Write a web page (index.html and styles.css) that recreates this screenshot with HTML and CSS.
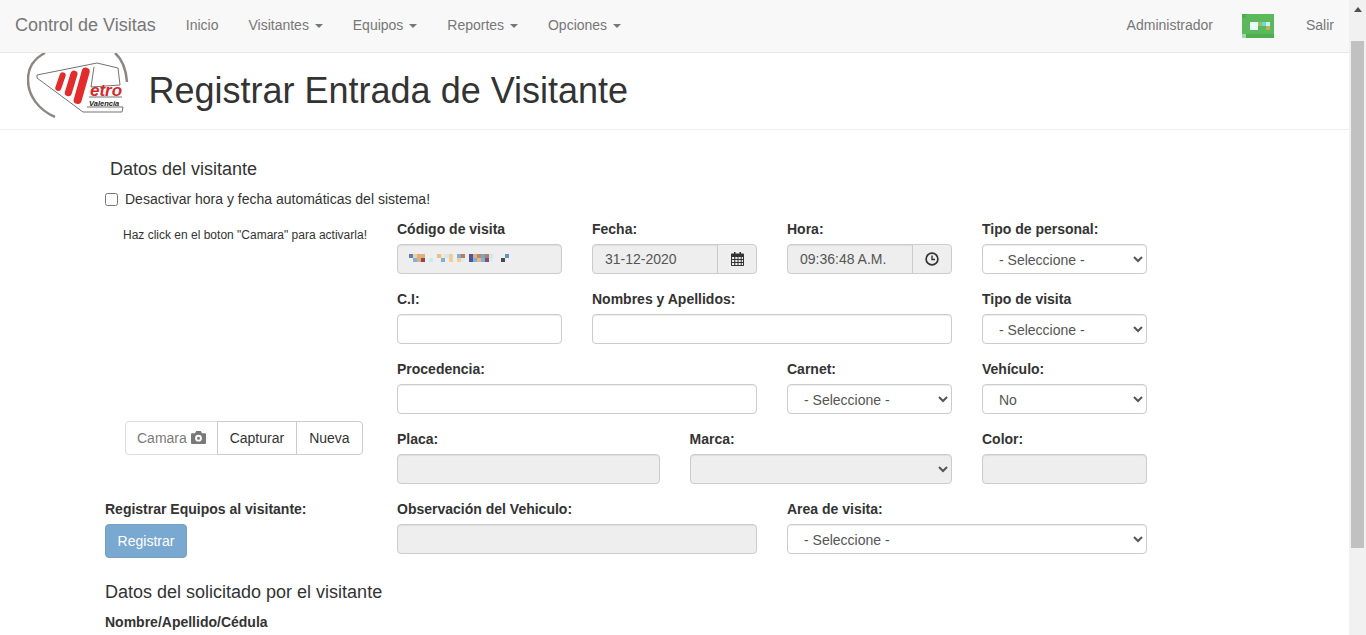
FILE: index.html
```html
<!DOCTYPE html>
<html lang="es">
<head>
  <meta charset="UTF-8" />
  <meta name="viewport" content="width=device-width, initial-scale=1.0"/>
  <title>Control de Visitas</title>
  <link rel="stylesheet" href="styles.css">
</head>
<body>
<div class="app">
  <div class="page">

    <!-- top navigation -->
    <nav class="navbar">
      <a class="brand" href="#">Control de Visitas</a>
      <a class="nav-link" href="#">Inicio</a>
      <a class="nav-link" href="#">Visitantes <span class="caret"></span></a>
      <a class="nav-link" href="#">Equipos <span class="caret"></span></a>
      <a class="nav-link" href="#">Reportes <span class="caret"></span></a>
      <a class="nav-link" href="#">Opciones <span class="caret"></span></a>
      <div class="nav-right">
        <a class="nav-link" href="#">Administrador</a>
        <svg class="avatar" width="32" height="24" viewBox="0 0 32 24">
          <rect width="32" height="24" fill="#5cb85c"/>
          <rect width="4" height="4" fill="#4cae4c"/>
          <rect y="20" width="32" height="4" fill="#4cae4c"/>
          <rect y="20" width="4" height="4" fill="#a5d6a5"/>
          <rect x="8" y="8" width="8" height="8" fill="#e8fffa"/>
          <rect x="16" y="8" width="4" height="4" fill="#a9b86a"/>
          <rect x="20" y="8" width="4" height="4" fill="#5ce0d8"/>
          <rect x="24" y="8" width="4" height="4" fill="#cfeff0"/>
          <rect x="24" y="12" width="4" height="4" fill="#c4b050"/>
        </svg>
        <a class="nav-link" href="#">Salir</a>
      </div>
    </nav>

    <!-- logo + page title -->
    <header class="page-header">
      <svg class="logo" width="102" height="65" viewBox="0 0 102 65">
        <g fill="none">
          <path d="M18 0C6 6 1 16 1 27c0 16 11 30 27 37" stroke="#8c8785" stroke-width="2.5"/>
          <path d="M88 0c7 6 11 16 12 29" stroke="#8c8785" stroke-width="2.5"/>
          <path d="M10 22L70 10l21 5 2 17-29 2 3-20M10 22v3l46 34h39l1-5H60" stroke="#77726f" stroke-width="1"/>
          <path d="M62 44h33" stroke="#77726f" stroke-width="1"/>
          <g stroke="#e32b2b" stroke-linecap="round">
            <path d="M35.7 22.3L31.3 35" stroke-width="6"/>
            <path d="M47 21l-5.7 18.7" stroke-width="7"/>
            <path d="M58.7 18.7L50.7 47" stroke-width="8"/>
          </g>
        </g>
        <text class="logo-etro" x="63" y="43">etro</text>
        <text class="logo-city" x="62" y="52.500">Valencia</text>
      </svg>
      <h1>Registrar Entrada de Visitante</h1>
    </header>

    <form class="visit-form">
      <h4 class="form-title">Datos del visitante</h4>
      <label class="check-row"><input type="checkbox"> Desactivar hora y fecha automáticas del sistema!</label>

      <div class="form-body">
        <!-- camera column -->
        <div class="side-col">
          <p class="hint">Haz click en el boton "Camara" para activarla!</p>
          <div class="btn-group">
            <button type="button" class="btn btn-off">Camara
              <svg width="15" height="13" viewBox="0 0 15 13"><path fill-rule="evenodd" fill="#333" d="M0 3.5C0 2.7.5 2.2 1.2 2.2H4L5.2 0h4.6L11 2.2h2.8c.7 0 1.2.5 1.2 1.3v8.2c0 .8-.5 1.3-1.2 1.3H1.2C.5 13 0 12.500 0 11.700zM7.500 3.800a3.400 3.400 0 1 0 0 6.800 3.400 3.400 0 0 0 0-6.800zm0 1.900a1.500 1.500 0 1 1 0 3 1.500 1.500 0 0 1 0-3z"/></svg>
            </button>
            <button type="button" class="btn">Capturar</button>
            <button type="button" class="btn">Nueva</button>
          </div>
          <div class="equip-block">
            <label class="field-label">Registrar Equipos al visitante:</label>
            <button type="button" class="btn-primary" disabled>Registrar</button>
          </div>
        </div>

        <!-- fields -->
        <div class="field-grid">
          <div class="field">
            <label class="field-label">Código de visita</label>
            <div class="control control-off code-box">
              <svg width="100" height="8" viewBox="0 0 100 8">
                <rect x="0" width="4" height="4" fill="#5b7fb8"/><rect x="4" width="4" height="4" fill="#f0cfa0"/><rect x="8" width="8" height="4" fill="#dcb07a"/>
                <rect x="28" width="4" height="4" fill="#e3c28f"/><rect x="32" width="4" height="4" fill="#f0e8c8"/><rect x="36" width="4" height="4" fill="#d0e8ef"/><rect x="40" width="4" height="4" fill="#f1cd9c"/>
                <rect x="48" width="4" height="4" fill="#7db0dc"/><rect x="52" width="4" height="4" fill="#b87f5c"/>
                <rect x="60" width="4" height="4" fill="#50549a"/><rect x="64" width="4" height="4" fill="#dcb07a"/><rect x="68" width="4" height="4" fill="#c08a5a"/><rect x="72" width="4" height="4" fill="#78a5d0"/><rect x="76" width="4" height="4" fill="#b87f5c"/><rect x="80" width="4" height="4" fill="#c8ecec"/>
                <rect x="96" width="4" height="4" fill="#5b94cf"/>
                <rect x="0" y="4" width="4" height="4" fill="#eef0e0"/><rect x="4" y="4" width="4" height="4" fill="#7db0dc"/><rect x="8" y="4" width="4" height="4" fill="#dcb07a"/><rect x="12" y="4" width="4" height="4" fill="#92434f"/>
                <rect x="20" y="4" width="4" height="4" fill="#c8ecec"/>
                <rect x="32" y="4" width="4" height="4" fill="#7db0dc"/><rect x="40" y="4" width="4" height="4" fill="#f1cd9c"/>
                <rect x="48" y="4" width="4" height="4" fill="#f1cd9c"/><rect x="52" y="4" width="4" height="4" fill="#d8efef"/>
                <rect x="60" y="4" width="4" height="4" fill="#50549a"/><rect x="64" y="4" width="4" height="4" fill="#7db0dc"/><rect x="68" y="4" width="4" height="4" fill="#e8b878"/><rect x="72" y="4" width="4" height="4" fill="#7db0dc"/><rect x="76" y="4" width="4" height="4" fill="#8a4a78"/><rect x="80" y="4" width="4" height="4" fill="#d8efef"/>
                <rect x="92" y="4" width="4" height="4" fill="#4a4a4a"/>
              </svg>
            </div>
          </div>
          <div class="field">
            <label class="field-label">Fecha:</label>
            <div class="input-group">
              <input class="control control-off" type="text" value="31-12-2020" disabled>
              <span class="addon">
                <svg width="13" height="14" viewBox="0 0 13 14"><path fill="#333" fill-rule="evenodd" d="M1 1.500h2V0h1.500v1.500h4V0H10v1.500h2c.6 0 1 .4 1 1V13c0 .6-.4 1-1 1H1c-.6 0-1-.4-1-1V2.500c0-.6.4-1 1-1zM1 5v2h2.200V5zm3.300 0v2h2.200V5zm3.200 0v2h2.200V5zm3.200 0v2H12V5zM1 8v2h2.200V8zm3.300 0v2h2.200V8zm3.200 0v2h2.200V8zm3.200 0v2H12V8zM1 11v2h2.200v-2zm3.300 0v2h2.200v-2zm3.200 0v2h2.200v-2zm3.200 0v2H12v-2z"/></svg>
              </span>
            </div>
          </div>
          <div class="field">
            <label class="field-label">Hora:</label>
            <div class="input-group">
              <input class="control control-off" type="text" value="09:36:48 A.M." disabled>
              <span class="addon">
                <svg width="14" height="14" viewBox="0 0 14 14"><circle cx="7" cy="7" r="5.900" fill="none" stroke="#333" stroke-width="1.700"/><path d="M7 3.500V7.500h3" fill="none" stroke="#333" stroke-width="1.400"/></svg>
              </span>
            </div>
          </div>
          <div class="field">
            <label class="field-label">Tipo de personal:</label>
            <select class="control"><option>- Seleccione -</option></select>
          </div>

          <div class="field">
            <label class="field-label">C.I:</label>
            <input class="control" type="text">
          </div>
          <div class="field span-2">
            <label class="field-label">Nombres y Apellidos:</label>
            <input class="control" type="text">
          </div>
          <div class="field">
            <label class="field-label">Tipo de visita</label>
            <select class="control"><option>- Seleccione -</option></select>
          </div>

          <div class="field span-2">
            <label class="field-label">Procedencia:</label>
            <input class="control" type="text">
          </div>
          <div class="field">
            <label class="field-label">Carnet:</label>
            <select class="control"><option>- Seleccione -</option></select>
          </div>
          <div class="field">
            <label class="field-label">Vehículo:</label>
            <select class="control"><option>No</option></select>
          </div>

          <div class="split span-3">
            <div class="field">
              <label class="field-label">Placa:</label>
              <input class="control control-off" type="text" disabled>
            </div>
            <div class="field">
              <label class="field-label">Marca:</label>
              <select class="control control-off" disabled><option></option></select>
            </div>
          </div>
          <div class="field">
            <label class="field-label">Color:</label>
            <input class="control control-off" type="text" disabled>
          </div>

          <div class="field span-2">
            <label class="field-label">Observación del Vehiculo:</label>
            <input class="control control-off" type="text" disabled>
          </div>
          <div class="field span-2">
            <label class="field-label">Area de visita:</label>
            <select class="control"><option>- Seleccione -</option></select>
          </div>
        </div>
      </div>

      <h4 class="sub-title">Datos del solicitado por el visitante</h4>
      <label class="field-label last-label">Nombre/Apellido/Cédula</label>
    </form>
  </div>

  <!-- window scrollbar -->
  <div class="scrollbar">
    <span class="scroll-arrow"></span>
    <span class="scroll-thumb"></span>
  </div>
</div>
</body>
</html>
```

FILE: styles.css
```css
* {
  box-sizing: border-box;
}
body {
  margin: 0;
  font-family: "Liberation Sans", Arial, sans-serif;
  font-size: 14px;
  line-height: 20px;
  color: #333;
  background-color: #fff;
  overflow: hidden;
}
.app {
  display: flex;
  height: 635px;
}
.page {
  flex: 1;
  min-width: 0;
  overflow: hidden;
}

/* navbar */
.navbar {
  display: flex;
  align-items: center;
  height: 53px;
  padding-bottom: 2px;
  background-color: #f8f8f8;
  border-bottom: 1px solid #e7e7e7;
}
.brand {
  padding: 0 15px;
  font-size: 18px;
  color: #777;
  text-decoration: none;
}
.nav-link {
  padding: 0 15px;
  color: #777;
  text-decoration: none;
}
.caret {
  display: inline-block;
  width: 0;
  height: 0;
  margin-left: 2px;
  vertical-align: middle;
  border-top: 4px solid #777;
  border-left: 4px solid transparent;
  border-right: 4px solid transparent;
}
.nav-right {
  display: flex;
  align-items: center;
  margin-left: auto;
}
.avatar {
  margin: 2px 17px 0 14px;
}

/* page title */
.page-header {
  display: flex;
  align-items: flex-start;
  height: 77px;
  padding-left: 27px;
  border-bottom: 1px solid #eee;
}
.logo {
  flex: none;
}
.logo-etro {
  font-size: 17px;
  font-weight: bold;
  font-style: italic;
  fill: #d6282c;
}
.logo-city {
  font-size: 7.500px;
  font-weight: bold;
  font-style: italic;
  fill: #222;
}
.page-header h1 {
  margin: 18px 0 0 19.500px;
  font-size: 36px;
  font-weight: 500;
  line-height: 40px;
}

/* form */
.visit-form {
  padding: 29px 0 0 105px;
}
.form-title,
.sub-title {
  margin: 0;
  font-size: 18px;
  font-weight: 500;
  line-height: 20px;
}
.form-title {
  padding-left: 5px;
}
.check-row {
  display: flex;
  align-items: center;
  margin-top: 10px;
}
.check-row input {
  width: 13px;
  height: 13px;
  margin: 0 7px 0 0;
}
.form-body {
  display: flex;
  gap: 30px;
  margin-top: 10px;
  height: 350px;
}
.side-col {
  width: 262px;
  flex: none;
}
.hint {
  margin: 8px 0 0 18px;
  font-size: 12px;
  line-height: 17px;
}
.btn-group {
  display: flex;
  width: 238px;
  margin: 177px 0 0 20px;
}
.btn {
  flex: none;
  height: 34px;
  padding: 6px 12px;
  margin-left: -1px;
  font: inherit;
  color: #333;
  white-space: nowrap;
  background-color: #fff;
  border: 1px solid #ccc;
}
.btn:first-child {
  margin-left: 0;
  border-radius: 4px 0 0 4px;
}
.btn:last-child {
  border-radius: 0 4px 4px 0;
}
.btn-off {
  padding: 6px 11px;
  opacity: .65;
}
.btn-off svg {
  vertical-align: -1px;
}
.equip-block {
  margin-top: 44px;
}
.btn-primary {
  display: block;
  width: 82px;
  height: 34px;
  padding: 6px 0;
  font: inherit;
  color: #fff;
  background-color: #337ab7;
  border: 1px solid #2e6da4;
  border-radius: 4px;
  opacity: .65;
}
.field-grid {
  display: grid;
  grid-template-columns: repeat(4, 165px);
  grid-auto-rows: 70px;
  column-gap: 30px;
}
.span-2 {
  grid-column: span 2;
}
.span-3 {
  grid-column: span 3;
}
.split {
  display: grid;
  grid-template-columns: 1fr 1fr;
  column-gap: 30px;
}
.field-label {
  display: block;
  margin-bottom: 5px;
  font-weight: bold;
}
.control {
  display: block;
  width: 100%;
  height: 30px;
  padding: 6px 12px;
  font: inherit;
  color: #555;
  background-color: #fff;
  border: 1px solid #ccc;
  border-radius: 4px;
  box-shadow: inset 0 1px 1px rgba(0, 0, 0, .075);
}
.control-off {
  background-color: #eee;
  opacity: 1;
}
.code-box {
  display: flex;
  align-items: flex-start;
  padding: 9px 11px;
}
.input-group {
  display: flex;
}
.input-group .control {
  flex: 1;
  min-width: 0;
  border-radius: 4px 0 0 4px;
}
.addon {
  display: flex;
  align-items: center;
  justify-content: center;
  flex: none;
  width: 40px;
  height: 30px;
  margin-left: -1px;
  background-color: #eee;
  border: 1px solid #ccc;
  border-radius: 0 4px 4px 0;
}
.sub-title {
  margin-top: 13px;
}
.last-label {
  margin: 10px 0 0;
}

/* scrollbar */
.scrollbar {
  display: flex;
  flex-direction: column;
  align-items: center;
  flex: none;
  width: 17px;
  background-color: #f1f1f1;
}
.scroll-arrow {
  width: 0;
  height: 0;
  margin-top: 7px;
  border-bottom: 5px solid #505050;
  border-left: 4px solid transparent;
  border-right: 4px solid transparent;
}
.scroll-thumb {
  width: 13px;
  height: 507px;
  margin-top: 29px;
  background-color: #c1c1c1;
}
```
